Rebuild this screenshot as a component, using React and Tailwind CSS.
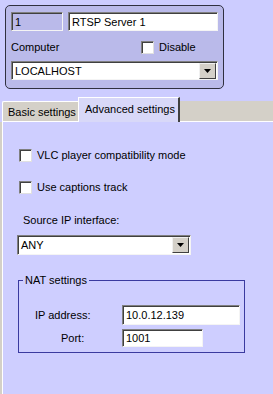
import React from 'react';

const Check = () => (
  <span className="w-[13px] h-[13px] bg-white border border-t-[#808080] border-l-[#808080] border-r-[#e0e0e0] border-b-[#e0e0e0] shadow-[inset_1px_1px_0_#404040] shrink-0" />
);

const Arrow = () => (
  <span className="w-[17px] h-[16px] bg-[#d4d0c8] border border-t-[#f0f0f0] border-l-[#f0f0f0] border-r-[#404040] border-b-[#404040] flex items-center justify-center shrink-0">
    <svg width="7" height="4" viewBox="0 0 7 4">
      <path d="M0 0h7L3.5 4z" fill="#000" />
    </svg>
  </span>
);

const Field = ({ className, children }) => (
  <div
    className={`bg-white border border-t-[#808080] border-l-[#808080] border-r-[#f4f4f4] border-b-[#f4f4f4] shadow-[inset_1px_1px_0_#404040] flex items-center pl-[3px] text-black ${className}`}
  >
    {children}
  </div>
);

const Combo = ({ className, children }) => (
  <div
    className={`bg-white border border-t-[#808080] border-l-[#808080] border-r-[#f4f4f4] border-b-[#f4f4f4] shadow-[inset_1px_1px_0_#404040] flex items-center justify-between pl-[3px] pr-[1px] text-black ${className}`}
  >
    <span>{children}</span>
    <Arrow />
  </div>
);

export default function App() {
  return (
    <div className="w-[273px] h-[394px] bg-[#ccccff] text-[11px] leading-[14px] text-black overflow-hidden flex flex-col whitespace-nowrap" style={{ fontFamily: '"Liberation Sans", Arial, sans-serif' }}>
      {/* Header panel */}
      <div className="pl-[5px] pt-[5px]">
        <div className="w-[219px] h-[84px] bg-[#babaea] border border-[#303040] rounded-[5px] px-[5px] pt-[6px]">
          <div className="flex gap-[5px]">
            <Field className="w-[52px] h-[19px] !bg-[#babaea]">1</Field>
            <Field className="w-[150px] h-[19px]">RTSP Server 1</Field>
          </div>
          <div className="flex items-center h-[30px] pt-[2px]">
            <span className="w-[130px]">Computer</span>
            <Check />
            <span className="ml-[5px]">Disable</span>
          </div>
          <Combo className="w-[207px] h-[19px]">LOCALHOST</Combo>
        </div>
      </div>

      {/* Tabs */}
      <div className="mt-[8px] flex items-end h-[25px]">
        <div className="ml-[2px] h-[21px] w-[76px] bg-[#d4d0c8] border-t border-l border-t-white border-l-white rounded-tl-[2px] flex items-center pl-[5px] border-b border-b-white">
          Basic settings
        </div>
        <div className="h-[25px] w-[102px] bg-[#d8d8f8] border-t border-l border-r-2 border-t-white border-l-white border-r-[#404040] flex items-center pl-[6px] pb-[2px]">
          Advanced settings
        </div>
        <div className="flex-1 h-[21px] bg-[#d4d0c8] border-b border-b-white" />
      </div>

      {/* Content */}
      <div className="flex-1 flex">
        <div className="w-[3px] bg-[#d4d0c8] border-r border-r-white" />
        <div className="flex-1 bg-[#ceceff] flex flex-col">
          <div className="flex items-center ml-[16px] mt-[26px]">
            <Check />
            <span className="ml-[5px]">VLC player compatibility mode</span>
          </div>
          <div className="flex items-center ml-[16px] mt-[18px]">
            <Check />
            <span className="ml-[5px]">Use captions track</span>
          </div>
          <div className="ml-[20px] mt-[19px]">Source IP interface:</div>
          <Combo className="ml-[14px] mt-[8px] w-[174px] h-[20px]">ANY</Combo>
          <div className="ml-[15px] mt-[25px] w-[227px] h-[73px] border border-[#3a3aa0] relative">
            <span className="absolute -top-[8px] left-[4px] bg-[#ceceff] px-[2px]">NAT settings</span>
            <div className="flex items-center mt-[24px]">
              <span className="ml-[16px] w-[87px]">IP address:</span>
              <Field className="w-[118px] h-[20px]">10.0.12.139</Field>
            </div>
            <div className="flex items-center mt-[4px]">
              <span className="ml-[42px] w-[61px]">Port:</span>
              <Field className="w-[81px] h-[18px]">1001</Field>
            </div>
          </div>
        </div>
      </div>
    </div>
  );
}
